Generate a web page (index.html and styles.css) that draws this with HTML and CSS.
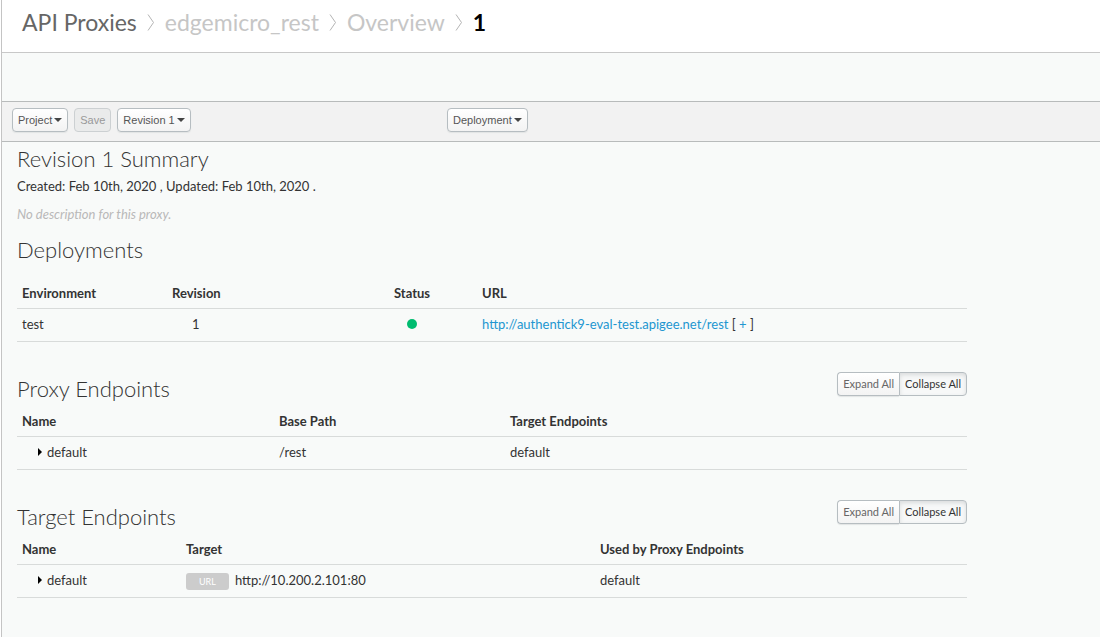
FILE: index.html
```html
<!DOCTYPE html>
<html lang="en">
<head>
<meta charset="utf-8">
<title>API Proxies - edgemicro_rest</title>
<link rel="stylesheet" href="styles.css">
</head>
<body>
<div class="app">
  <header class="header">
    <nav class="crumbs" aria-label="Breadcrumb">
      <a class="crumb crumb-root" href="#">API Proxies</a>
      <svg class="chevron" viewBox="0 0 8 18" aria-hidden="true"><path d="M1 1.5 L6.5 9.5 L1 17.5"/></svg>
      <a class="crumb" href="#">edgemicro_rest</a>
      <svg class="chevron" viewBox="0 0 8 18" aria-hidden="true"><path d="M1 1.5 L6.5 9.5 L1 17.5"/></svg>
      <a class="crumb" href="#">Overview</a>
      <svg class="chevron" viewBox="0 0 8 18" aria-hidden="true"><path d="M1 1.5 L6.5 9.5 L1 17.5"/></svg>
      <span class="crumb crumb-current">1</span>
    </nav>
  </header>
  <div class="toolbar">
    <div class="tools">
      <button class="btn" type="button">Project<span class="caret"></span></button>
      <button class="btn" type="button" disabled>Save</button>
      <button class="btn" type="button">Revision 1<span class="caret"></span></button>
    </div>
    <button class="btn" type="button">Deployment<span class="caret"></span></button>
  </div>
  <main class="content">
    <section class="section">
      <h2 class="title">Revision 1 Summary</h2>
      <p class="meta">Created: Feb 10th, 2020 , Updated: Feb 10th, 2020 .</p>
      <p class="description">No description for this proxy.</p>
    </section>
    <section class="section deployments">
      <h2 class="title">Deployments</h2>
      <table class="table">
        <colgroup><col class="col-env"><col class="col-rev"><col class="col-status"><col></colgroup>
        <thead><tr><th>Environment</th><th>Revision</th><th class="center">Status</th><th>URL</th></tr></thead>
        <tbody><tr>
          <td>test</td><td class="number">1</td>
          <td class="center"><span class="dot" role="img" aria-label="Deployed"></span></td>
          <td><a class="link" href="#">http://authentick9-eval-test.apigee.net/rest</a> [ <a class="link" href="#">+</a> ]</td>
        </tr></tbody>
      </table>
    </section>
    <section class="section">
      <div class="section-head">
        <h2 class="title">Proxy Endpoints</h2>
        <div class="group"><button class="btn" type="button">Expand All</button><button class="btn active" type="button">Collapse All</button></div>
      </div>
      <table class="table">
        <colgroup><col class="col-proxy"><col class="col-path"><col></colgroup>
        <thead><tr><th>Name</th><th>Base Path</th><th>Target Endpoints</th></tr></thead>
        <tbody><tr><td class="name"><span class="arrow"></span>default</td><td>/rest</td><td>default</td></tr></tbody>
      </table>
    </section>
    <section class="section">
      <div class="section-head">
        <h2 class="title">Target Endpoints</h2>
        <div class="group"><button class="btn" type="button">Expand All</button><button class="btn active" type="button">Collapse All</button></div>
      </div>
      <table class="table">
        <colgroup><col class="col-name"><col class="col-target"><col></colgroup>
        <thead><tr><th>Name</th><th>Target</th><th>Used by Proxy Endpoints</th></tr></thead>
        <tbody><tr><td class="name"><span class="arrow"></span>default</td><td><div class="target"><span class="tag">URL</span><span>http://10.200.2.101:80</span></div></td><td>default</td></tr></tbody>
      </table>
    </section>
  </main>
</div>
</body>
</html>
```
FILE: styles.css
```css
* { box-sizing: border-box; }
body {
  margin: 0;
  background: #fff;
  color: #333;
  font: 13px/20px Lato, "Liberation Sans", sans-serif;
}
.app {
  min-height: 100vh;
  margin-left: 1px;
  border-left: 1px solid #c4c4c4;
  background: #f8faf9;
}
.header {
  padding: 4px 20px 12px;
  border-bottom: 1px solid #c8c8c8;
  background: #fff;
}
.crumbs { display: flex; align-items: center; gap: 10px; }
.crumb {
  color: #c6c6c6;
  font-size: 23px;
  line-height: 36px;
  text-decoration: none;
}
.crumb-root { color: #666; }
.crumb-current { color: #000; font-weight: 700; }
.chevron {
  width: 8px;
  height: 18px;
  fill: none;
  stroke: #b4b4b4;
}
.toolbar {
  display: grid;
  grid-template-columns: 435px auto;
  justify-content: start;
  margin-top: 48px;
  padding: 6px 10px 9px;
  border: solid #b8bbbb;
  border-width: 1px 0;
  background: #f2f2f2;
}
.tools { display: flex; gap: 6px; }
.btn {
  display: inline-flex;
  align-items: center;
  gap: 2px;
  height: 24px;
  padding: 0 5px;
  border: 1px solid #b6bdc1;
  border-radius: 4px;
  background: linear-gradient(#fff, #f3f3f3);
  box-shadow: 0 1px 1px #e2e4e4;
  color: #555;
  font: 11px/20px "Liberation Sans", Arial, sans-serif;
}
.btn:disabled {
  border-color: #ccd0d2;
  background: #eaebeb;
  box-shadow: none;
  color: #999;
}
.caret {
  border: 4px solid transparent;
  border-top-color: #444;
  border-bottom: 0;
}
.content { max-width: 980px; padding: 0 15px; }
.section { margin-bottom: 30px; }
.title {
  margin: 0;
  color: #333;
  font-size: 22px;
  font-weight: 300;
  line-height: 34px;
}
.meta, .description { margin: 0 0 8px; }
.description { color: #b8b8b8; font-style: italic; }
.section:first-child { margin-bottom: 9px; }
.deployments .title { margin-bottom: 13px; }
.section-head {
  display: flex;
  justify-content: space-between;
  align-items: flex-start;
  margin-bottom: 2px;
}
.group { display: flex; }
.group .btn { color: #666; font-family: Lato, sans-serif; }
.group .btn:first-child { border-right: 0; border-radius: 4px 0 0 4px; }
.group .btn:last-child { border-radius: 0 4px 4px 0; }
.group .active {
  background: #f7f8f8;
  box-shadow: inset 0 2px 4px #d9dbdc;
  color: #333;
}
.table {
  width: 100%;
  border-spacing: 0;
  table-layout: fixed;
}
.table th, .table td {
  padding: 5px 5px 7px;
  border-bottom: 1px solid #d8dbda;
  text-align: left;
  vertical-align: top;
}
.table th { padding: 3px 5px 5px; font-weight: 700; }
.table .center { text-align: center; }
.table .number { padding-left: 25px; }
.table .name { padding-left: 21px; }
.col-env { width: 150px; }
.col-rev { width: 180px; }
.col-status { width: 130px; }
.col-proxy { width: 257px; }
.col-path { width: 231px; }
.col-name { width: 164px; }
.col-target { width: 414px; }
.dot {
  display: inline-block;
  width: 10px;
  height: 10px;
  border-radius: 50%;
  background: #00bc70;
}
.link { color: #2296d0; text-decoration: none; }
.arrow {
  display: inline-block;
  margin: 0 5px 1px 0;
  border: 4px solid transparent;
  border-left-color: #000;
  border-right: 0;
}
.target { display: flex; align-items: baseline; gap: 6px; }
.tag {
  padding: 0 13px;
  border-radius: 3px;
  background: #ccc;
  color: #fff;
  font-size: 9px;
  line-height: 17px;
}
```
